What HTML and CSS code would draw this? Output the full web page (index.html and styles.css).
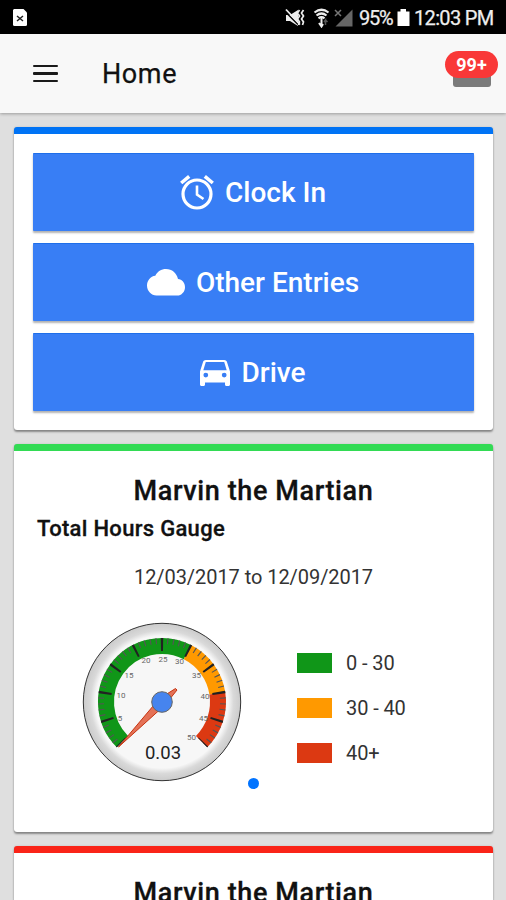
FILE: index.html
```html
<!DOCTYPE html>
<html lang="en">
<head>
<meta charset="utf-8">
<title>Home</title>
<link rel="stylesheet" href="styles.css">
</head>
<body>
<div class="statusbar">
  <svg class="sim" width="14" height="17" viewBox="0 0 14 17"><path d="M1 0h9.500L14 3.500V15.500Q14 17 12.500 17H1.500Q0 17 0 15.500V1Z" fill="#fff"/><path d="M4 7l6 5M10 7l-6 5" stroke="#222" stroke-width="1.500"/></svg>
  <div class="status-right">
    <svg width="72" height="20" viewBox="0 0 72 20">
      <path d="M1 7h4l8-5v16l-8-5H1z" fill="#eee"/><path d="M0 3.500l14 14" stroke="#000" stroke-width="1.500"/><path d="M1 1.500l14 15" stroke="#eee" stroke-width="1.800"/>
      <path d="M14.500 2l-2 3 2 3-2 3 2 3-1 3M18.500 2l-2 3 2 3-2 3 2 3-1 3" fill="none" stroke="#eee" stroke-width="1.700"/>
      <g fill="none" stroke="#eee" stroke-width="2.200"><path d="M29.500 4.500Q36.500-1 43.500 4.500M31.500 7.500Q36.500 3.500 41.500 7.500M33.500 10.300Q36.500 8 39.500 10.300"/></g>
      <path d="M36.500 9.500v8M34 15l2.500 3.500L38 16" fill="none" stroke="#eee" stroke-width="2"/><path d="M40.500 17v-5l-1.500 2M40.500 12l2 2" fill="none" stroke="#555" stroke-width="1.500"/>
      <path d="M67.500 1.500v17H50.500z" fill="#666"/><path d="M50 2l6 6M56 2l-6 6" stroke="#777" stroke-width="1.500"/>
    </svg>
    <span class="pct">95%</span>
    <svg class="battery" width="13" height="18" viewBox="0 0 13 18"><path d="M3.500 0h5.500v2.500H12.500V17H.5V2.500h3z" fill="#fff"/></svg>
    <span class="time">12:03 PM</span>
  </div>
</div>
<header class="toolbar">
  <div class="menu"><i></i><i></i><i></i></div>
  <h1>Home</h1>
  <div class="inbox"><span class="badge">99+</span></div>
</header>
<main>
  <section class="card blue">
    <div class="button"><svg width="34" height="36" viewBox="0 0 34 36"><g fill="none" stroke="#fff"><circle cx="17" cy="19" r="14" stroke-width="3.200"/><path d="M17 10.500v9l6.500 4.500" stroke-width="2.600"/><path d="M1.200 8l8-6.600M32.800 8l-8-6.600" stroke-width="3.500"/></g></svg><span>Clock In</span></div>
    <div class="button"><svg width="38" height="27" viewBox="0 0 38 27"><path d="M31 10C29.700 4 25 0 19 0c-4.700 0-8.700 2.700-10.700 6.700C3.500 7.200 0 11.500 0 16.500 0 22 4.300 26.500 9.500 26.500h20.700c4.300 0 7.800-3.700 7.800-8.300C38 13.800 35 10.300 31 10z" fill="#fff"/></svg><span>Other Entries</span></div>
    <div class="button"><svg width="30" height="26" viewBox="0 0 30 26"><path fill="#fff" fill-rule="evenodd" d="M26.900 1.800C26.500.7 25.500 0 24.200 0H5.800C4.500 0 3.500.7 3.100 1.800L0 11.500v13C0 25.400.7 26 1.500 26h2C4.400 26 5 25.400 5 24.500V22.500h20v2c0 .9.600 1.500 1.500 1.500h2c.8 0 1.500-.6 1.500-1.500v-13zM5.800 17.500a2.400 2.400 0 1 1 0-4.800 2.400 2.400 0 0 1 0 4.800zm18.400 0a2.400 2.400 0 1 1 0-4.800 2.400 2.400 0 0 1 0 4.800zM3.300 10.300L5.800 2h18.400l2.500 8.300z"/></svg><span>Drive</span></div>
  </section>
  <section class="card green">
    <h2>Marvin the Martian</h2>
    <h3>Total Hours Gauge</h3>
    <p class="dates">12/03/2017 to 12/09/2017</p>
    <div class="chart">
      <svg class="gauge" width="160" height="160" viewBox="-80 -80 160 160">
        <defs><radialGradient id="rim"><stop offset=".84" stop-color="#f7f7f7"/><stop offset=".91" stop-color="#d9d9d9"/><stop offset="1" stop-color="#cbcbcb"/></radialGradient></defs>
        <circle r="78.700" fill="url(#rim)" stroke="#333" stroke-width="1"/>
        <g fill="none">
          <g stroke-width="16">
            <path stroke="#109618" d="M-39.600 39.600A56 56 0 0 1 25.420-49.900"/>
            <path stroke="#ff9900" d="M25.420-49.900A56 56 0 0 1 55.310-8.760"/>
            <path stroke="#dc3912" d="M55.310-8.760A56 56 0 0 1 39.600 39.600"/>
          </g>
          <path class="minor" pathLength="50" d="M-43.100 43.100A61 61 0 1 1 43.100 43.100"/>
          <path class="major" pathLength="50" d="M-40.660 40.660A57.500 57.500 0 1 1 40.660 40.660"/>
        </g>
        <g class="labels"><text x="-42" y="18.500">5</text><text x="-41" y="-4">10</text><text x="-33" y="-24">15</text><text x="-16" y="-39">20</text><text x="1" y="-40.500">25</text><text x="17.500" y="-38.500">30</text><text x="34.500" y="-24">35</text><text x="43" y="-3.500">40</text><text x="41.500" y="18.500">45</text><text x="29.500" y="37.500">50</text></g>
        <path d="M-43.500 45L-3-3 13.500-13.500 15-12 3 3z" fill="#dc3912" fill-opacity=".7" stroke="#c63310"/>
        <circle r="10.300" fill="#4684ee" stroke="#666"/>
        <text class="value" x="1" y="56.500">0.03</text>
      </svg>
      <ul class="legend">
        <li><i class="g"></i><span>0 - 30</span></li>
        <li><i class="o"></i><span>30 - 40</span></li>
        <li><i class="r"></i><span>40+</span></li>
      </ul>
    </div>
    <div class="pager"></div>
  </section>
  <section class="card red"><h2>Marvin the Martian</h2></section>
</main>
</body>
</html>
```

FILE: styles.css
```css
* { box-sizing: border-box; }
body { margin: 0; height: 900px; overflow: hidden; background: #dfdfdf; font-family: Roboto, sans-serif; color: #111; }
svg { display: block; flex: none; }
h1, h2, h3, p, ul { margin: 0; padding: 0; }
.statusbar { height: 34px; background: #000; color: #eee; display: flex; align-items: center; justify-content: space-between; padding: 1px 11px 0 13px; font-size: 20px; white-space: nowrap; }
.status-right { display: flex; align-items: center; margin-right: 1px; -webkit-text-stroke: .25px #eee; }
.pct { margin-left: 2px; width: 36px; letter-spacing: -1.3px; }
.battery { margin: 0 4px 0 2px; }
.time { width: 80px; letter-spacing: -.65px; }
.toolbar { height: 79px; background: #f8f8f8; display: flex; align-items: center; padding: 0 8px 0 33px; box-shadow: 0 1px 3px rgba(0,0,0,.3); }
.menu { width: 25px; height: 17px; display: flex; flex-direction: column; justify-content: space-between; }
.menu i { height: 2.300px; background: #1a1a1a; border-radius: 1px; }
h1 { margin-left: 44px; font-size: 27px; line-height: 32px; font-weight: 400; letter-spacing: .6px; -webkit-text-stroke: .25px #111; flex: 1; }
.inbox { align-self: flex-start; margin: 37px 7px 0 0; width: 38px; height: 16px; background: #7b7b7b; border-radius: 3px; position: relative; }
.badge { position: absolute; left: -8px; top: -20px; width: 53px; height: 27px; border-radius: 14px; background: #f93838; color: #fff; font-size: 18px; font-weight: 700; line-height: 27px; text-align: center; }
main { height: 787px; padding: 14px 13px 0 14px; display: flex; flex-direction: column; gap: 14px; }
.card { background: #fff; border-radius: 3px; border-top: 7px solid; box-shadow: 0 2px 2px rgba(0,0,0,.38), 0 0 2px rgba(0,0,0,.15); }
.blue { height: 303px; flex: none; padding: 19px 19px 0; border-color: #0073f5; display: flex; flex-direction: column; gap: 12px; }
.green { height: 388px; flex: none; border-color: #32db54; }
.red { flex: 1; min-height: 0; border-color: #fa2418; border-radius: 3px 3px 0 0; }
.button { height: 78px; flex: none; display: flex; align-items: center; justify-content: center; gap: 11px; padding-right: 1px; background: #387ef5; color: #fff; font-size: 28px; font-weight: 500; border-radius: 1px; border-top: 1px solid #1e6ee9; box-shadow: 0 2px 2px rgba(0,0,0,.3); white-space: nowrap; }
h2 { padding-top: 24px; text-align: center; font-size: 27px; line-height: 32px; font-weight: 500; letter-spacing: .6px; -webkit-text-stroke: .3px #111; }
.red h2 { height: 46px; }
h3 { margin: 9px 0 0 23px; font-size: 22px; line-height: 26px; font-weight: 500; letter-spacing: .3px; -webkit-text-stroke: .3px #111; }
.dates { margin-top: 23px; text-align: center; font-size: 20px; line-height: 24px; letter-spacing: -.06px; color: #333; }
.chart { display: flex; margin: 33px 0 0 68px; }
.minor { stroke: #555; stroke-width: 6px; stroke-dasharray: .2 .8; stroke-dashoffset: .1; }
.major { stroke: #222; stroke-width: 13px; stroke-dasharray: .4 4.600; stroke-dashoffset: .2; }
.labels { font-size: 8px; fill: #666; text-anchor: middle; }
.value { font-size: 18.500px; fill: #222; text-anchor: middle; }
.legend { list-style: none; margin: 29px 0 0 55px; display: flex; flex-direction: column; gap: 21px; }
.legend li { height: 24px; display: flex; align-items: center; gap: 14px; font-size: 20px; letter-spacing: -.1px; color: #333; }
.legend i { width: 35px; height: 20px; }
.g { background: #109618; }
.o { background: #ff9900; }
.r { background: #dc3912; }
.pager { width: 11px; height: 11px; border-radius: 50%; background: #0073ff; margin: -4px auto 0; }
```
